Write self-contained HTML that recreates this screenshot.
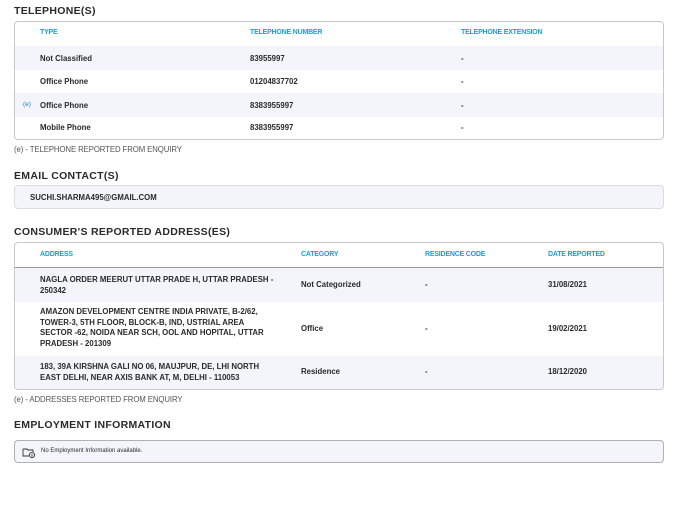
<!DOCTYPE html>
<html><head><style>
*{margin:0;padding:0;box-sizing:border-box}
body{width:677px;height:507px;background:#fff;font-family:"Liberation Sans",sans-serif;color:#222;position:relative;overflow:hidden}
.h{position:absolute;left:14px;font-size:10.5px;font-weight:bold;color:#2a2a2a;letter-spacing:0.3px}
.box{position:absolute;left:14px;width:650px;border:1px solid #c8c8cc;border-radius:4px;overflow:hidden}
.r{position:absolute;left:0;right:0}
.s{background:#f4f5fa}
.t{position:absolute;font-size:7.8px;font-weight:bold;color:#2a2a2a;white-space:nowrap}
.th{position:absolute;font-size:7px;font-weight:bold;color:#1a9fd0;letter-spacing:-0.2px}
.note{position:absolute;left:14px;font-size:7.8px;color:#555;letter-spacing:-0.1px}
</style></head><body>
<div class="h" style="top:5px">TELEPHONE(S)</div>
<div class="box" style="top:21px;height:119px">
 <div class="th" style="left:25px;top:7px">TYPE</div>
 <div class="th" style="left:235px;top:7px">TELEPHONE NUMBER</div>
 <div class="th" style="left:446px;top:7px">TELEPHONE EXTENSION</div>
 <div class="r s" style="top:24px;height:24px"></div>
 <div class="r s" style="top:71px;height:24px"></div>
 <div class="t" style="left:25px;top:32px">Not Classified</div><div class="t" style="left:235px;top:32px">83955997</div><div class="t" style="left:446px;top:32px">-</div>
 <div class="t" style="left:25px;top:55px">Office Phone</div><div class="t" style="left:235px;top:55px">01204837702</div><div class="t" style="left:446px;top:55px">-</div>
 <div class="t" style="left:8px;top:79px;color:#1a7fc0;font-size:6.5px;font-weight:normal">(e)</div>
 <div class="t" style="left:25px;top:79px">Office Phone</div><div class="t" style="left:235px;top:79px">8383955997</div><div class="t" style="left:446px;top:79px">-</div>
 <div class="t" style="left:25px;top:101px">Mobile Phone</div><div class="t" style="left:235px;top:101px">8383955997</div><div class="t" style="left:446px;top:101px">-</div>
</div>
<div class="note" style="top:145px">(e) - TELEPHONE REPORTED FROM ENQUIRY</div>
<div class="h" style="top:170px">EMAIL CONTACT(S)</div>
<div class="box" style="top:185px;height:24px;background:#f4f5fa;border-color:#dcdce2">
 <div class="t" style="left:15px;top:7px">SUCHI.SHARMA495@GMAIL.COM</div>
</div>
<div class="h" style="top:226px">CONSUMER'S REPORTED ADDRESS(ES)</div>
<div class="box" style="top:242px;height:148px">
 <div class="th" style="left:25px;top:8px">ADDRESS</div>
 <div class="th" style="left:286px;top:8px">CATEGORY</div>
 <div class="th" style="left:410px;top:8px">RESIDENCE CODE</div>
 <div class="th" style="left:533px;top:8px">DATE REPORTED</div>
 <div class="r" style="top:24px;height:1px;background:#999"></div>
 <div class="r s" style="top:25px;height:34px"></div>
 <div class="r s" style="top:113px;height:34px"></div>
 <div class="t" style="left:25px;top:32px;line-height:10.5px">NAGLA ORDER MEERUT UTTAR PRADE H, UTTAR PRADESH -<br>250342</div>
 <div class="t" style="left:286px;top:37px">Not Categorized</div><div class="t" style="left:410px;top:37px">-</div><div class="t" style="left:533px;top:37px">31/08/2021</div>
 <div class="t" style="left:25px;top:64px;line-height:10.5px">AMAZON DEVELOPMENT CENTRE INDIA PRIVATE, B-2/62,<br>TOWER-3, 5TH FLOOR, BLOCK-B, IND, USTRIAL AREA<br>SECTOR -62, NOIDA NEAR SCH, OOL AND HOPITAL, UTTAR<br>PRADESH - 201309</div>
 <div class="t" style="left:286px;top:81px">Office</div><div class="t" style="left:410px;top:81px">-</div><div class="t" style="left:533px;top:81px">19/02/2021</div>
 <div class="t" style="left:25px;top:119px;line-height:10.5px">183, 39A KIRSHNA GALI NO 06, MAUJPUR, DE, LHI NORTH<br>EAST DELHI, NEAR AXIS BANK AT, M, DELHI - 110053</div>
 <div class="t" style="left:286px;top:124px">Residence</div><div class="t" style="left:410px;top:124px">-</div><div class="t" style="left:533px;top:124px">18/12/2020</div>
</div>
<div class="note" style="top:395px">(e) - ADDRESSES REPORTED FROM ENQUIRY</div>
<div class="h" style="top:419px">EMPLOYMENT INFORMATION</div>
<div class="box" style="top:440px;height:23px;background:#f4f5fa;border-color:#b0b0b6">
 <svg style="position:absolute;left:7px;top:6px" width="14" height="11" viewBox="0 0 14 11" fill="none" stroke="#333" stroke-width="0.9"><path d="M1 2h4l1 1h5v2M1 2v7h6"/><circle cx="10" cy="8" r="2.6"/><path d="M10 7v2.5"/></svg>
 <div class="t" style="left:26px;top:7px;font-size:6px;font-weight:normal">No Employment Information available.</div>
</div>
</body></html>
